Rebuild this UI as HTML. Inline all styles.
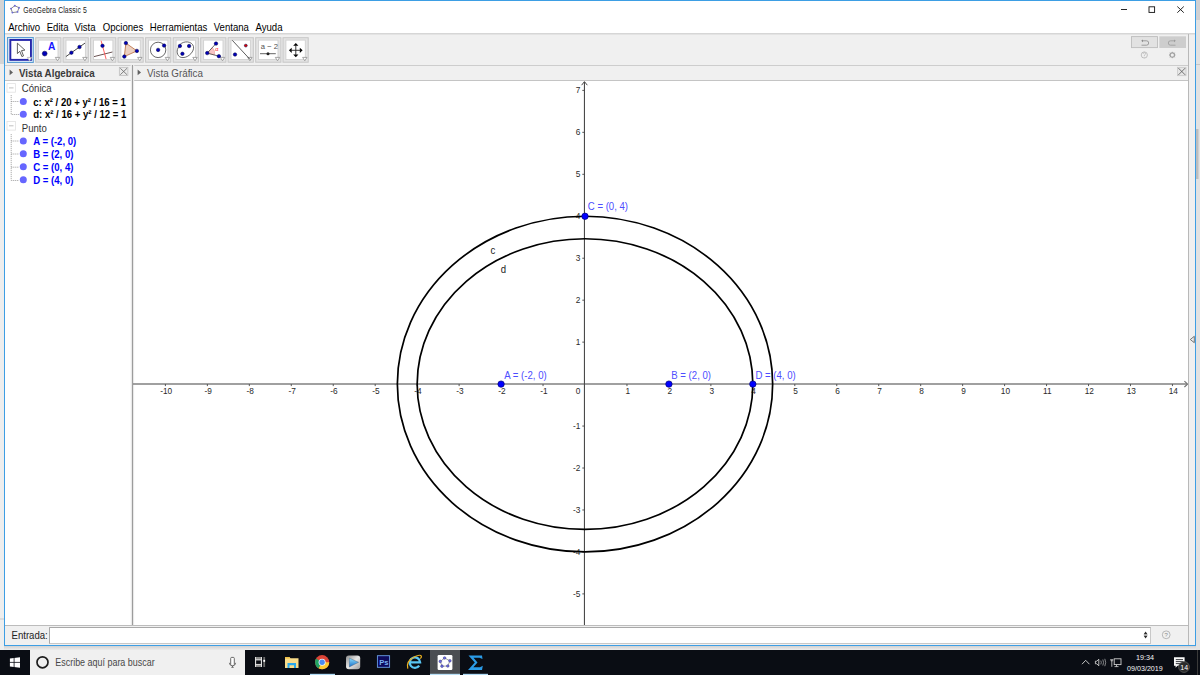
<!DOCTYPE html>
<html><head><meta charset="utf-8"><title>GeoGebra Classic 5</title>
<style>html,body{margin:0;padding:0;width:1200px;height:675px;overflow:hidden;background:#e9e9e9}svg{display:block}</style>
</head><body>
<svg width="1200" height="675" viewBox="0 0 1200 675" font-family="Liberation Sans">
<defs><clipPath id="gclip"><rect x="133" y="81" width="1055" height="544"/></clipPath></defs>
<rect x="0" y="0" width="1200" height="675" fill="#e9e9e9"/>
<rect x="0" y="0" width="4" height="64" fill="#d4d4d4"/>
<rect x="0" y="64" width="4" height="586" fill="#eeeeee"/>
<rect x="0" y="618.5" width="4" height="1" fill="#c8c8c8"/>
<rect x="1196" y="0" width="4" height="650" fill="#e2e2e2"/>
<rect x="1196" y="0" width="4" height="20" fill="#d0d0d2"/>
<rect x="1196" y="64" width="4" height="1" fill="#c6c6c6"/>
<defs><linearGradient id="shd" x1="0" y1="0" x2="0" y2="1"><stop offset="0" stop-color="#d2d2d2"/><stop offset="1" stop-color="#ececec"/></linearGradient></defs>
<rect x="4" y="646" width="1192" height="4" fill="url(#shd)"/>
<rect x="1196" y="129" width="2.5" height="50" fill="#bdbdbd"/>
<rect x="4" y="0" width="1192" height="646" fill="#f0f0f0"/>
<rect x="5" y="1" width="1190" height="32" fill="#ffffff"/>
<rect x="5" y="33" width="1190" height="1.5" fill="#d6d6d6"/>
<rect x="5" y="81" width="126" height="544" fill="#ffffff"/>
<rect x="133" y="81" width="1055" height="544" fill="#ffffff"/>
<rect x="5" y="65" width="1184" height="1" fill="#cdcdcd"/>
<rect x="5" y="80" width="126" height="1" fill="#c4c4c4"/>
<rect x="133" y="80" width="1055" height="1" fill="#c4c4c4"/>
<rect x="130.6" y="65" width="3.6" height="561" fill="#f2f2f2"/>
<rect x="131.9" y="65" width="1.2" height="561" fill="#9c9c9c"/>
<rect x="1188" y="34" width="1" height="611" fill="#b8b8b8"/>
<rect x="5" y="625" width="1183" height="1" fill="#bcbcbc"/>
<rect x="4.5" y="0.5" width="1191" height="645" fill="none" stroke="#3d9ee4" stroke-width="1"/>
<g fill="none" stroke="#707070" stroke-width="0.8"><path d="M14.8 5.7 L19 7.7 L17.5 11.9 L12.4 12.6 L11 8.6 Z"/></g>
<circle cx="14.8" cy="5.7" r="0.95" fill="#6a6ad8"/>
<circle cx="19" cy="7.7" r="0.95" fill="#6a6ad8"/>
<circle cx="17.5" cy="11.9" r="0.95" fill="#6a6ad8"/>
<circle cx="12.4" cy="12.6" r="0.95" fill="#6a6ad8"/>
<circle cx="11" cy="8.6" r="0.95" fill="#6a6ad8"/>
<text transform="translate(23.3 12.9) scale(0.86 1.05)" x="0" y="0" font-size="8" fill="#1a1a1a" letter-spacing="0.12">GeoGebra Classic 5</text>
<rect x="1121" y="9" width="6" height="0.9" fill="#111"/>
<rect x="1149" y="6.8" width="5.6" height="5.6" fill="none" stroke="#111" stroke-width="0.9"/>
<path d="M1177.3 6.5 L1183.8 12.7 M1183.8 6.5 L1177.3 12.7" stroke="#111" stroke-width="0.9"/>
<text transform="translate(8.2 30.5) scale(1 1.07)" x="0" y="0" font-size="9.6" fill="#000">Archivo</text>
<text transform="translate(46.7 30.5) scale(1 1.07)" x="0" y="0" font-size="9.6" fill="#000">Edita</text>
<text transform="translate(74.4 30.5) scale(1 1.07)" x="0" y="0" font-size="9.6" fill="#000">Vista</text>
<text transform="translate(102.7 30.5) scale(1 1.07)" x="0" y="0" font-size="9.6" fill="#000">Opciones</text>
<text transform="translate(149.8 30.5) scale(1 1.07)" x="0" y="0" font-size="9.6" fill="#000">Herramientas</text>
<text transform="translate(213.7 30.5) scale(1 1.07)" x="0" y="0" font-size="9.6" fill="#000">Ventana</text>
<text transform="translate(255.5 30.5) scale(1 1.07)" x="0" y="0" font-size="9.6" fill="#000">Ayuda</text>
<rect x="7.5" y="37.5" width="25.8" height="25" fill="#cfe3f6" stroke="#5a9cd2" stroke-width="1"/>
<rect x="10.35" y="39.95" width="20.6" height="19.9" fill="#ffffff" stroke="#2626aa" stroke-width="1.9"/>
<path d="M27.3 57.400000000000006 L31.7 57.400000000000006 L29.5 60.800000000000004 Z" fill="#fff" stroke="#b0b0b0" stroke-width="0.8"/>
<rect x="35.7" y="37.7" width="25.2" height="24.5" fill="#e4e4e4" stroke="#c6c6c6" stroke-width="1"/>
<rect x="38.6" y="40.1" width="19.4" height="19.5" fill="#ffffff" stroke="#d0d0d0" stroke-width="0.9"/>
<path d="M55.300000000000004 57.400000000000006 L59.70000000000001 57.400000000000006 L57.50000000000001 60.800000000000004 Z" fill="#fff" stroke="#909090" stroke-width="0.8"/>
<rect x="63.1" y="37.7" width="25.2" height="24.5" fill="#e4e4e4" stroke="#c6c6c6" stroke-width="1"/>
<rect x="66.0" y="40.1" width="19.4" height="19.5" fill="#ffffff" stroke="#d0d0d0" stroke-width="0.9"/>
<path d="M82.69999999999999 57.400000000000006 L87.1 57.400000000000006 L84.89999999999999 60.800000000000004 Z" fill="#fff" stroke="#909090" stroke-width="0.8"/>
<rect x="90.6" y="37.7" width="25.2" height="24.5" fill="#e4e4e4" stroke="#c6c6c6" stroke-width="1"/>
<rect x="93.5" y="40.1" width="19.4" height="19.5" fill="#ffffff" stroke="#d0d0d0" stroke-width="0.9"/>
<path d="M110.19999999999999 57.400000000000006 L114.6 57.400000000000006 L112.39999999999999 60.800000000000004 Z" fill="#fff" stroke="#909090" stroke-width="0.8"/>
<rect x="118.0" y="37.7" width="25.2" height="24.5" fill="#e4e4e4" stroke="#c6c6c6" stroke-width="1"/>
<rect x="120.9" y="40.1" width="19.4" height="19.5" fill="#ffffff" stroke="#d0d0d0" stroke-width="0.9"/>
<path d="M137.6 57.400000000000006 L141.99999999999997 57.400000000000006 L139.79999999999998 60.800000000000004 Z" fill="#fff" stroke="#909090" stroke-width="0.8"/>
<rect x="145.6" y="37.7" width="25.2" height="24.5" fill="#e4e4e4" stroke="#c6c6c6" stroke-width="1"/>
<rect x="148.5" y="40.1" width="19.4" height="19.5" fill="#ffffff" stroke="#d0d0d0" stroke-width="0.9"/>
<path d="M165.2 57.400000000000006 L169.59999999999997 57.400000000000006 L167.39999999999998 60.800000000000004 Z" fill="#fff" stroke="#909090" stroke-width="0.8"/>
<rect x="173.2" y="37.7" width="25.2" height="24.5" fill="#e4e4e4" stroke="#c6c6c6" stroke-width="1"/>
<rect x="176.1" y="40.1" width="19.4" height="19.5" fill="#ffffff" stroke="#d0d0d0" stroke-width="0.9"/>
<path d="M192.79999999999998 57.400000000000006 L197.19999999999996 57.400000000000006 L194.99999999999997 60.800000000000004 Z" fill="#fff" stroke="#909090" stroke-width="0.8"/>
<rect x="200.7" y="37.7" width="25.2" height="24.5" fill="#e4e4e4" stroke="#c6c6c6" stroke-width="1"/>
<rect x="203.6" y="40.1" width="19.4" height="19.5" fill="#ffffff" stroke="#d0d0d0" stroke-width="0.9"/>
<path d="M220.29999999999998 57.400000000000006 L224.69999999999996 57.400000000000006 L222.49999999999997 60.800000000000004 Z" fill="#fff" stroke="#909090" stroke-width="0.8"/>
<rect x="228.1" y="37.7" width="25.2" height="24.5" fill="#e4e4e4" stroke="#c6c6c6" stroke-width="1"/>
<rect x="231.0" y="40.1" width="19.4" height="19.5" fill="#ffffff" stroke="#d0d0d0" stroke-width="0.9"/>
<path d="M247.7 57.400000000000006 L252.09999999999997 57.400000000000006 L249.89999999999998 60.800000000000004 Z" fill="#fff" stroke="#909090" stroke-width="0.8"/>
<rect x="255.7" y="37.7" width="25.2" height="24.5" fill="#e4e4e4" stroke="#c6c6c6" stroke-width="1"/>
<rect x="258.59999999999997" y="40.1" width="19.4" height="19.5" fill="#ffffff" stroke="#d0d0d0" stroke-width="0.9"/>
<path d="M275.3 57.400000000000006 L279.7 57.400000000000006 L277.5 60.800000000000004 Z" fill="#fff" stroke="#909090" stroke-width="0.8"/>
<rect x="283.0" y="37.7" width="25.2" height="24.5" fill="#e4e4e4" stroke="#c6c6c6" stroke-width="1"/>
<rect x="285.9" y="40.1" width="19.4" height="19.5" fill="#ffffff" stroke="#d0d0d0" stroke-width="0.9"/>
<path d="M302.6 57.400000000000006 L307.0 57.400000000000006 L304.8 60.800000000000004 Z" fill="#fff" stroke="#909090" stroke-width="0.8"/>
<path d="M17.4 43.2 L17.4 53.6 L19.8 51.3 L21.9 56.6 L23.5 55.9 L21.5 50.6 L24.9 50.1 Z" fill="#fff" stroke="#3a3a3a" stroke-width="0.8" stroke-linejoin="round"/>
<circle cx="44.7" cy="53.6" r="2.4" fill="#0000b8" stroke="#000040" stroke-width="0.5"/>
<text transform="translate(47.90 50.00) scale(1 1.02)" x="0" y="0" font-size="10.2" font-weight="bold" fill="#1515ff" text-anchor="start" >A</text>
<path d="M65.9 56.6 L85 43.1" stroke="#333" stroke-width="0.9"/>
<circle cx="71.4" cy="52.7" r="1.75" fill="#0000b8" stroke="#000040" stroke-width="0.5"/>
<circle cx="79.5" cy="47.0" r="1.75" fill="#0000b8" stroke="#000040" stroke-width="0.5"/>
<path d="M94 56.6 L112.4 52" stroke="#5a4040" stroke-width="0.9"/>
<path d="M101.1 40.7 L106.1 59.1" stroke="#ff5050" stroke-width="0.9"/>
<circle cx="102.5" cy="45.8" r="1.75" fill="#0000b8" stroke="#000040" stroke-width="0.5"/>
<path d="M125.9 43.1 L136.9 50.9 L124.3 56.6 Z" fill="#ecd0c0" stroke="#c07850" stroke-width="0.9"/>
<circle cx="125.9" cy="43.1" r="1.75" fill="#0000b8" stroke="#000040" stroke-width="0.5"/>
<circle cx="136.9" cy="50.9" r="1.75" fill="#0000b8" stroke="#000040" stroke-width="0.5"/>
<circle cx="124.3" cy="56.6" r="1.75" fill="#0000b8" stroke="#000040" stroke-width="0.5"/>
<circle cx="158.1" cy="49.9" r="7.7" fill="none" stroke="#444" stroke-width="0.8"/>
<circle cx="158.1" cy="49.9" r="1.75" fill="#0000b8" stroke="#000040" stroke-width="0.5"/>
<circle cx="164.1" cy="45.6" r="1.75" fill="#0000b8" stroke="#000040" stroke-width="0.5"/>
<path d="M180 44.5 C184 40.5 192 41 193.5 46.5 C194.5 51 189 57.5 183 57.6 C177.5 57.8 176 52 178 48 Z" fill="none" stroke="#444" stroke-width="0.8"/>
<circle cx="179.9" cy="46.0" r="1.75" fill="#0000b8" stroke="#000040" stroke-width="0.5"/>
<circle cx="189.1" cy="46.0" r="1.75" fill="#0000b8" stroke="#000040" stroke-width="0.5"/>
<circle cx="182.4" cy="53.8" r="1.75" fill="#0000b8" stroke="#000040" stroke-width="0.5"/>
<path d="M207.2 53.1 L212.3 47.6 A7.5 7.5 0 0 1 214.5 55 Z" fill="#f8c4c4" stroke="#e89090" stroke-width="0.4"/>
<path d="M216 43.6 L207.2 53.1 L218.9 56.2" fill="none" stroke="#444" stroke-width="0.8"/>
<circle cx="207.2" cy="53.1" r="1.75" fill="#0000b8" stroke="#000040" stroke-width="0.5"/>
<circle cx="216" cy="43.6" r="1.75" fill="#0000b8" stroke="#000040" stroke-width="0.5"/>
<circle cx="218.9" cy="56.2" r="1.75" fill="#0000b8" stroke="#000040" stroke-width="0.5"/>
<text transform="translate(215.20 51.20) scale(1 1.05)" x="0" y="0" font-size="5.6" font-weight="normal" fill="#ff2020" text-anchor="start" >α</text>
<path d="M232.3 40.3 L250 59.4" stroke="#333" stroke-width="0.8"/>
<circle cx="235" cy="54.5" r="1.75" fill="#0000b8" stroke="#000040" stroke-width="0.5"/>
<circle cx="245.8" cy="45.6" r="1.45" fill="#e00000" stroke="#000040" stroke-width="0.5"/>
<text transform="translate(260.80 49.40) scale(1 1.05)" x="0" y="0" font-size="7.6" font-weight="normal" fill="#505050" text-anchor="start" >a − 2</text>
<path d="M260 53.7 L275.8 53.7" stroke="#555" stroke-width="0.9"/>
<circle cx="268" cy="53.7" r="1.5" fill="#222"/>
<g fill="#000"><path d="M295.8 43 L293.2 45.8 L298.4 45.8 Z"/><path d="M295.8 57.3 L293.2 54.6 L298.4 54.6 Z"/><path d="M288.9 50.3 L291.7 47.7 L291.7 52.9 Z"/><path d="M302.6 50.3 L299.8 47.7 L299.8 52.9 Z"/></g>
<path d="M295.8 45 L295.8 55.5 M290.5 50.3 L301 50.3" stroke="#222" stroke-width="0.9"/>
<rect x="1131.5" y="36.6" width="26" height="11" fill="#e2e2e2" stroke="#bdbdbd" stroke-width="0.9"/>
<rect x="1159.3" y="36.3" width="26.7" height="11.7" fill="#cdcdcd"/>
<path d="M1142 40.8 L1146.5 40.8 A2.2 2.2 0 0 1 1146.5 45.2 L1141.5 45.2" fill="none" stroke="#8a8a8a" stroke-width="0.8"/><path d="M1141.2 40.8 L1143 39.4 L1143 42.2 Z" fill="#8a8a8a"/>
<path d="M1175 40.8 L1170.5 40.8 A2.2 2.2 0 0 0 1170.5 45.2 L1175.5 45.2" fill="none" stroke="#9a9a9a" stroke-width="0.8"/><path d="M1175.8 40.8 L1174 39.4 L1174 42.2 Z" fill="#9a9a9a"/>
<circle cx="1144.3" cy="55" r="3.1" fill="none" stroke="#b4b4b4" stroke-width="0.8"/><path d="M1143.1 53.9 Q1143.3 52.6 1144.4 52.6 Q1145.6 52.7 1145.5 53.8 Q1145.4 54.6 1144.4 55.2 L1144.4 56.2 M1144.4 57 L1144.4 57.6" fill="none" stroke="#b4b4b4" stroke-width="0.7"/>
<circle cx="1172.3" cy="55" r="2.2" fill="none" stroke="#a0a0a0" stroke-width="1.2"/><path d="M1172.3 51.8 L1172.3 58.2 M1169.1 55 L1175.5 55 M1170 52.7 L1174.6 57.3 M1174.6 52.7 L1170 57.3" stroke="#a0a0a0" stroke-width="0.9"/><circle cx="1172.3" cy="55" r="1.5" fill="#f0f0f0"/>
<path d="M9.6 69.6 L13 72.4 L9.6 75.2 Z" fill="#606060"/>
<text transform="translate(19.00 76.60) scale(1 1.1)" x="0" y="0" font-size="9.8" font-weight="bold" fill="#3a3a3a" text-anchor="start" >Vista Algebraica</text>
<rect x="119.3" y="67.3" width="8.6" height="8.3" fill="#eaeaea" stroke="#b8b8b8" stroke-width="0.7"/>
<path d="M120.3 68.3 L127 74.7 M127 68.3 L120.3 74.7" stroke="#666" stroke-width="0.8"/>
<path d="M137.6 69.6 L141 72.4 L137.6 75.2 Z" fill="#606060"/>
<text transform="translate(147.00 76.70) scale(1 1.1)" x="0" y="0" font-size="9.8" font-weight="normal" fill="#555" text-anchor="start" >Vista Gráfica</text>
<rect x="1177.6" y="67.3" width="8.4" height="8.4" fill="#e6e6e6" stroke="#c4c4c4" stroke-width="0.7"/>
<path d="M1178.4 68.1 L1185.2 74.9 M1185.2 68.1 L1178.4 74.9" stroke="#555" stroke-width="0.8"/>
<rect x="7" y="83.6" width="8.5" height="8.6" fill="#fff" stroke="#e2e2e2" stroke-width="0.8"/>
<path d="M9 87.89999999999999 L13.5 87.89999999999999" stroke="#b0b0b0" stroke-width="0.8"/>
<rect x="7" y="121.5" width="8.5" height="8.6" fill="#fff" stroke="#e2e2e2" stroke-width="0.8"/>
<path d="M9 125.8 L13.5 125.8" stroke="#b0b0b0" stroke-width="0.8"/>
<text transform="translate(21.80 92.40) scale(1 1.1)" x="0" y="0" font-size="9.6" font-weight="normal" fill="#333" text-anchor="start" >Cónica</text>
<text transform="translate(21.80 131.50) scale(1 1.1)" x="0" y="0" font-size="9.6" font-weight="normal" fill="#333" text-anchor="start" >Punto</text>
<path d="M11.2 95 L11.2 114.5 L19 114.5 M11.2 101.5 L19 101.5" fill="none" stroke="#8a8a8a" stroke-width="0.7" stroke-dasharray="1.2 0.8"/>
<path d="M11.2 134 L11.2 180.5 L19 180.5 M11.2 141 L19 141 M11.2 154 L19 154 M11.2 167.2 L19 167.2" fill="none" stroke="#8a8a8a" stroke-width="0.7" stroke-dasharray="1.2 0.8"/>
<circle cx="23.3" cy="101.39999999999999" r="3.5" fill="#6666ff"/>
<text transform="translate(33.20 105.60) scale(1 1.1)" x="0" y="0" font-size="9.6" font-weight="bold" fill="#000" text-anchor="start" >c: x² / 20 + y² / 16 = 1</text>
<circle cx="23.3" cy="114.2" r="3.5" fill="#6666ff"/>
<text transform="translate(33.20 118.40) scale(1 1.1)" x="0" y="0" font-size="9.6" font-weight="bold" fill="#000" text-anchor="start" >d: x² / 16 + y² / 12 = 1</text>
<circle cx="23.3" cy="140.9" r="3.5" fill="#6666ff"/>
<text transform="translate(33.20 145.10) scale(1 1.1)" x="0" y="0" font-size="9.6" font-weight="bold" fill="#0000ff" text-anchor="start" >A = (-2, 0)</text>
<circle cx="23.3" cy="153.70000000000002" r="3.5" fill="#6666ff"/>
<text transform="translate(33.20 157.90) scale(1 1.1)" x="0" y="0" font-size="9.6" font-weight="bold" fill="#0000ff" text-anchor="start" >B = (2, 0)</text>
<circle cx="23.3" cy="166.8" r="3.5" fill="#6666ff"/>
<text transform="translate(33.20 171.00) scale(1 1.1)" x="0" y="0" font-size="9.6" font-weight="bold" fill="#0000ff" text-anchor="start" >C = (0, 4)</text>
<circle cx="23.3" cy="179.8" r="3.5" fill="#6666ff"/>
<text transform="translate(33.20 184.00) scale(1 1.1)" x="0" y="0" font-size="9.6" font-weight="bold" fill="#0000ff" text-anchor="start" >D = (4, 0)</text>
<g clip-path="url(#gclip)">
<path d="M133 384.1 L1187 384.1" stroke="#808080" stroke-width="1.5"/>
<path d="M1184.4 381.2 L1187.6 384.1 L1184.4 387" fill="none" stroke="#707070" stroke-width="1.1"/>
<path d="M584.45 82 L584.45 625" stroke="#4a4a4a" stroke-width="1.1"/>
<path d="M581.6 85.2 L584.45 81.6 L587.3 85.2" fill="none" stroke="#4a4a4a" stroke-width="1"/>
<path d="M165.40 384.1 L165.40 386.1 M207.36 384.1 L207.36 386.1 M249.32 384.1 L249.32 386.1 M291.28 384.1 L291.28 386.1 M333.24 384.1 L333.24 386.1 M375.20 384.1 L375.20 386.1 M417.16 384.1 L417.16 386.1 M459.12 384.1 L459.12 386.1 M501.08 384.1 L501.08 386.1 M543.04 384.1 L543.04 386.1 M626.96 384.1 L626.96 386.1 M668.92 384.1 L668.92 386.1 M710.88 384.1 L710.88 386.1 M752.84 384.1 L752.84 386.1 M794.80 384.1 L794.80 386.1 M836.76 384.1 L836.76 386.1 M878.72 384.1 L878.72 386.1 M920.68 384.1 L920.68 386.1 M962.64 384.1 L962.64 386.1 M1004.60 384.1 L1004.60 386.1 M1046.56 384.1 L1046.56 386.1 M1088.52 384.1 L1088.52 386.1 M1130.48 384.1 L1130.48 386.1 M1172.44 384.1 L1172.44 386.1 M582.3 593.90 L584.4 593.90 M582.3 551.94 L584.4 551.94 M582.3 509.98 L584.4 509.98 M582.3 468.02 L584.4 468.02 M582.3 426.06 L584.4 426.06 M582.3 342.14 L584.4 342.14 M582.3 300.18 L584.4 300.18 M582.3 258.22 L584.4 258.22 M582.3 216.26 L584.4 216.26 M582.3 174.30 L584.4 174.30 M582.3 132.34 L584.4 132.34 M582.3 90.38 L584.4 90.38" stroke="#444" stroke-width="0.9"/>
<text transform="translate(166.20 393.70) scale(1 1.02)" x="0" y="0" font-size="8.3" font-weight="normal" fill="#2a2a2a" text-anchor="middle" >-10</text>
<text transform="translate(208.16 393.70) scale(1 1.02)" x="0" y="0" font-size="8.3" font-weight="normal" fill="#2a2a2a" text-anchor="middle" >-9</text>
<text transform="translate(250.12 393.70) scale(1 1.02)" x="0" y="0" font-size="8.3" font-weight="normal" fill="#2a2a2a" text-anchor="middle" >-8</text>
<text transform="translate(292.08 393.70) scale(1 1.02)" x="0" y="0" font-size="8.3" font-weight="normal" fill="#2a2a2a" text-anchor="middle" >-7</text>
<text transform="translate(334.04 393.70) scale(1 1.02)" x="0" y="0" font-size="8.3" font-weight="normal" fill="#2a2a2a" text-anchor="middle" >-6</text>
<text transform="translate(376.00 393.70) scale(1 1.02)" x="0" y="0" font-size="8.3" font-weight="normal" fill="#2a2a2a" text-anchor="middle" >-5</text>
<text transform="translate(417.96 393.70) scale(1 1.02)" x="0" y="0" font-size="8.3" font-weight="normal" fill="#2a2a2a" text-anchor="middle" >-4</text>
<text transform="translate(459.92 393.70) scale(1 1.02)" x="0" y="0" font-size="8.3" font-weight="normal" fill="#2a2a2a" text-anchor="middle" >-3</text>
<text transform="translate(501.88 393.70) scale(1 1.02)" x="0" y="0" font-size="8.3" font-weight="normal" fill="#2a2a2a" text-anchor="middle" >-2</text>
<text transform="translate(543.84 393.70) scale(1 1.02)" x="0" y="0" font-size="8.3" font-weight="normal" fill="#2a2a2a" text-anchor="middle" >-1</text>
<text transform="translate(580.40 393.70) scale(1 1.02)" x="0" y="0" font-size="8.3" font-weight="normal" fill="#2a2a2a" text-anchor="end" >0</text>
<text transform="translate(627.76 393.70) scale(1 1.02)" x="0" y="0" font-size="8.3" font-weight="normal" fill="#2a2a2a" text-anchor="middle" >1</text>
<text transform="translate(669.72 393.70) scale(1 1.02)" x="0" y="0" font-size="8.3" font-weight="normal" fill="#2a2a2a" text-anchor="middle" >2</text>
<text transform="translate(711.68 393.70) scale(1 1.02)" x="0" y="0" font-size="8.3" font-weight="normal" fill="#2a2a2a" text-anchor="middle" >3</text>
<text transform="translate(753.64 393.70) scale(1 1.02)" x="0" y="0" font-size="8.3" font-weight="normal" fill="#2a2a2a" text-anchor="middle" >4</text>
<text transform="translate(795.60 393.70) scale(1 1.02)" x="0" y="0" font-size="8.3" font-weight="normal" fill="#2a2a2a" text-anchor="middle" >5</text>
<text transform="translate(837.56 393.70) scale(1 1.02)" x="0" y="0" font-size="8.3" font-weight="normal" fill="#2a2a2a" text-anchor="middle" >6</text>
<text transform="translate(879.52 393.70) scale(1 1.02)" x="0" y="0" font-size="8.3" font-weight="normal" fill="#2a2a2a" text-anchor="middle" >7</text>
<text transform="translate(921.48 393.70) scale(1 1.02)" x="0" y="0" font-size="8.3" font-weight="normal" fill="#2a2a2a" text-anchor="middle" >8</text>
<text transform="translate(963.44 393.70) scale(1 1.02)" x="0" y="0" font-size="8.3" font-weight="normal" fill="#2a2a2a" text-anchor="middle" >9</text>
<text transform="translate(1005.40 393.70) scale(1 1.02)" x="0" y="0" font-size="8.3" font-weight="normal" fill="#2a2a2a" text-anchor="middle" >10</text>
<text transform="translate(1047.36 393.70) scale(1 1.02)" x="0" y="0" font-size="8.3" font-weight="normal" fill="#2a2a2a" text-anchor="middle" >11</text>
<text transform="translate(1089.32 393.70) scale(1 1.02)" x="0" y="0" font-size="8.3" font-weight="normal" fill="#2a2a2a" text-anchor="middle" >12</text>
<text transform="translate(1131.28 393.70) scale(1 1.02)" x="0" y="0" font-size="8.3" font-weight="normal" fill="#2a2a2a" text-anchor="middle" >13</text>
<text transform="translate(1173.24 393.70) scale(1 1.02)" x="0" y="0" font-size="8.3" font-weight="normal" fill="#2a2a2a" text-anchor="middle" >14</text>
<text transform="translate(580.40 596.90) scale(1 1.02)" x="0" y="0" font-size="8.3" font-weight="normal" fill="#2a2a2a" text-anchor="end" >-5</text>
<text transform="translate(580.40 554.94) scale(1 1.02)" x="0" y="0" font-size="8.3" font-weight="normal" fill="#2a2a2a" text-anchor="end" >-4</text>
<text transform="translate(580.40 512.98) scale(1 1.02)" x="0" y="0" font-size="8.3" font-weight="normal" fill="#2a2a2a" text-anchor="end" >-3</text>
<text transform="translate(580.40 471.02) scale(1 1.02)" x="0" y="0" font-size="8.3" font-weight="normal" fill="#2a2a2a" text-anchor="end" >-2</text>
<text transform="translate(580.40 429.06) scale(1 1.02)" x="0" y="0" font-size="8.3" font-weight="normal" fill="#2a2a2a" text-anchor="end" >-1</text>
<text transform="translate(580.40 345.14) scale(1 1.02)" x="0" y="0" font-size="8.3" font-weight="normal" fill="#2a2a2a" text-anchor="end" >1</text>
<text transform="translate(580.40 303.18) scale(1 1.02)" x="0" y="0" font-size="8.3" font-weight="normal" fill="#2a2a2a" text-anchor="end" >2</text>
<text transform="translate(580.40 261.22) scale(1 1.02)" x="0" y="0" font-size="8.3" font-weight="normal" fill="#2a2a2a" text-anchor="end" >3</text>
<text transform="translate(580.40 219.26) scale(1 1.02)" x="0" y="0" font-size="8.3" font-weight="normal" fill="#2a2a2a" text-anchor="end" >4</text>
<text transform="translate(580.40 177.30) scale(1 1.02)" x="0" y="0" font-size="8.3" font-weight="normal" fill="#2a2a2a" text-anchor="end" >5</text>
<text transform="translate(580.40 135.34) scale(1 1.02)" x="0" y="0" font-size="8.3" font-weight="normal" fill="#2a2a2a" text-anchor="end" >6</text>
<text transform="translate(580.40 93.38) scale(1 1.02)" x="0" y="0" font-size="8.3" font-weight="normal" fill="#2a2a2a" text-anchor="end" >7</text>
<ellipse cx="585.0" cy="384.1" rx="187.65" ry="167.84" fill="none" stroke="#000" stroke-width="1.7"/>
<ellipse cx="585.0" cy="384.1" rx="167.84" ry="145.35" fill="none" stroke="#000" stroke-width="1.7"/>
<text transform="translate(490.50 253.50) scale(1 1.1)" x="0" y="0" font-size="9.6" font-weight="normal" fill="#222" text-anchor="start" >c</text>
<text transform="translate(500.80 272.80) scale(1 1.1)" x="0" y="0" font-size="9.6" font-weight="normal" fill="#222" text-anchor="start" >d</text>
<circle cx="501.08" cy="384.10" r="3.2" fill="#0000ff" stroke="#00007a" stroke-width="0.7"/>
<text transform="translate(504.30 378.50) scale(1 1.1)" x="0" y="0" font-size="9.6" font-weight="normal" fill="#4d4dff" text-anchor="start" >A = (-2, 0)</text>
<circle cx="668.92" cy="384.10" r="3.2" fill="#0000ff" stroke="#00007a" stroke-width="0.7"/>
<text transform="translate(671.30 378.50) scale(1 1.1)" x="0" y="0" font-size="9.6" font-weight="normal" fill="#4d4dff" text-anchor="start" >B = (2, 0)</text>
<circle cx="585.00" cy="216.26" r="3.2" fill="#0000ff" stroke="#00007a" stroke-width="0.7"/>
<text transform="translate(587.80 209.90) scale(1 1.1)" x="0" y="0" font-size="9.6" font-weight="normal" fill="#4d4dff" text-anchor="start" >C = (0, 4)</text>
<circle cx="752.84" cy="384.10" r="3.2" fill="#0000ff" stroke="#00007a" stroke-width="0.7"/>
<text transform="translate(755.50 378.50) scale(1 1.1)" x="0" y="0" font-size="9.6" font-weight="normal" fill="#4d4dff" text-anchor="start" >D = (4, 0)</text>
</g>
<path d="M1190.3 339.5 L1194.3 336.3 L1194.3 342.7 Z" fill="none" stroke="#555" stroke-width="0.8"/>
<text transform="translate(11.50 639.30) scale(1 1.08)" x="0" y="0" font-size="9.6" font-weight="normal" fill="#222" text-anchor="start" >Entrada:</text>
<rect x="49.5" y="627.5" width="1101" height="16" fill="#fff" stroke="#c8c8c8" stroke-width="1"/><path d="M49.5 643.5 L49.5 627.5 L1150.5 627.5" fill="none" stroke="#a8a8a8" stroke-width="1"/>
<path d="M1145.6 631.6 L1143.7 634.3 L1147.5 634.3 Z M1145.6 638.4 L1143.7 635.7 L1147.5 635.7 Z" fill="#2a2a2a"/><rect x="1143.9" y="634.3" width="3.4" height="1.4" fill="#9a9a9a"/>
<circle cx="1166.2" cy="634.8" r="3.9" fill="none" stroke="#a8a8a8" stroke-width="0.8"/>
<text transform="translate(1166.20 637.10) scale(1 1.02)" x="0" y="0" font-size="6" font-weight="normal" fill="#8a8a8a" text-anchor="middle" >?</text>
<rect x="0" y="650" width="1200" height="25" fill="#0a0d14"/>
<path d="M9.9 658.4 L20 657.2 L20 667.7 L9.9 666.5 Z" fill="#fff"/><path d="M14.1 656.5 L14.1 668.5 M9 662.4 L21 662.4" stroke="#0a0d14" stroke-width="0.8"/>
<rect x="30" y="650" width="215" height="25" fill="#f0f0f0"/>
<circle cx="42.5" cy="662.3" r="5.5" fill="none" stroke="#1e1e1e" stroke-width="1.7"/>
<text transform="translate(55.3 666.2) scale(0.895 1.02)" x="0" y="0" font-size="10" fill="#484848">Escribe aquí para buscar</text>
<path d="M230.7 664.6 L230.7 658.4 Q230.7 657.4 231.7 657.4 L233.3 657.4 Q234.3 657.4 234.3 658.4 L234.3 664.6" fill="#fff" stroke="#5a5a5a" stroke-width="0.9"/><path d="M229.4 662.8 Q229.6 665.8 232.5 665.8 Q235.4 665.8 235.6 662.8 M232.5 665.8 L232.5 667.2 M231.3 667.3 L233.7 667.3" fill="none" stroke="#5a5a5a" stroke-width="0.9"/>
<rect x="255" y="657" width="7" height="10" fill="#8a8a8a"/><rect x="256.2" y="660.3" width="4.6" height="3.6" fill="#0a0d14"/>
<path d="M255 659.8 L262 659.8 M255 664.6 L262 664.6 M255.5 657 L255.5 667 M261.5 657 L261.5 667" stroke="#e6e6e6" stroke-width="0.9"/>
<rect x="263.3" y="657" width="1.8" height="10" fill="#6a6a6a"/><rect x="263.3" y="659.8" width="1.8" height="2" fill="#fff"/>
<path d="M285 657.3 L289.5 657.3 L290.5 658.3 L298.5 658.3 L298.5 668 L285 668 Z" fill="#f9dc8a"/><rect x="285" y="657" width="4.8" height="1.6" fill="#eec048"/>
<path d="M287.5 663 L296 663 L296 668 L294 668 L294 665.2 L289.5 665.2 L289.5 668 L287.5 668 Z" fill="#2aa8ec"/>
<circle cx="322.1" cy="662.2" r="7.1" fill="#db4437"/>
<path d="M322.1 662.2 L329.2 662.2 A7.1 7.1 0 0 1 318.5 668.3 Z" fill="#fcc934"/>
<path d="M322.1 662.2 L318.5 668.3 A7.1 7.1 0 0 1 316 658.6 Z" fill="#1fa463"/>
<path d="M325.6 662.2 L329.2 662.2 M320.3 665.2 L318.5 668.3 M320.3 659.2 L316 658.6" stroke="none"/>
<circle cx="322.1" cy="662.2" r="3.5" fill="#f4f4f4"/><circle cx="322.1" cy="662.2" r="2.7" fill="#4a8af4"/>
<rect x="310" y="673.8" width="25" height="1.2" fill="#b0dbf5"/>
<defs><linearGradient id="mpg" x1="0" y1="0" x2="1" y2="1"><stop offset="0" stop-color="#8c8c8c"/><stop offset="0.5" stop-color="#e8e8e8"/><stop offset="1" stop-color="#9a9a9a"/></linearGradient><linearGradient id="mpb" x1="0" y1="0" x2="0" y2="1"><stop offset="0" stop-color="#8ee0ff"/><stop offset="1" stop-color="#1a70c8"/></linearGradient></defs>
<rect x="346" y="655.5" width="14.2" height="13.8" rx="2.8" fill="url(#mpg)"/><path d="M349.3 658 L358.6 662.3 L349.3 667 Z" fill="url(#mpb)" stroke="#334" stroke-width="0.3"/>
<rect x="377.4" y="655.7" width="12.2" height="11.6" fill="#0c0a5c" stroke="#6a9ee6" stroke-width="0.9"/>
<text x="379.2" y="664.6" font-family="Liberation Sans" font-size="7.6" font-weight="bold" fill="#7ab2f4">Ps</text>
<path d="M409.6 662.4 L420.1 662.4 A5.2 5.2 0 1 0 419.2 665.6" fill="none" stroke="#59c6f4" stroke-width="2.3"/>
<path d="M407.8 668.6 Q405.8 661 414.5 656.8 Q420.5 654 421.4 656.3 Q421.6 657.3 420.2 658.6" fill="none" stroke="#eab020" stroke-width="1.2"/>
<rect x="430" y="650" width="30" height="25" fill="#4b4e52"/>
<rect x="437.6" y="655" width="14.8" height="15" rx="1.2" fill="#fff"/>
<path d="M444.6 658 L449.9 660.8 L447.8 666 L442 666.2 L440.3 661.4 Z" fill="none" stroke="#8a8a8a" stroke-width="0.8"/>
<circle cx="444.6" cy="658" r="1.35" fill="#6a6ae0" stroke="#303070" stroke-width="0.4"/>
<circle cx="449.9" cy="660.8" r="1.35" fill="#6a6ae0" stroke="#303070" stroke-width="0.4"/>
<circle cx="447.8" cy="666" r="1.35" fill="#6a6ae0" stroke="#303070" stroke-width="0.4"/>
<circle cx="442" cy="666.2" r="1.35" fill="#6a6ae0" stroke="#303070" stroke-width="0.4"/>
<circle cx="440.3" cy="661.4" r="1.35" fill="#6a6ae0" stroke="#303070" stroke-width="0.4"/>
<rect x="430" y="673.8" width="30" height="1.2" fill="#b8dff6"/>
<path d="M468.5 655.5 L482 655.5 L482.5 659 L479.5 657.8 L473.5 657.8 L477.5 662.5 L473.3 667.3 L480 667.3 L482.8 665.8 L482 670 L468 670 L474.8 662.5 Z" fill="#2b9ce8"/>
<rect x="463" y="673.8" width="25" height="1.2" fill="#b0dbf5"/>
<path d="M1082 664.2 L1085.7 660.3 L1089.4 664.2" fill="none" stroke="#d8d8d8" stroke-width="0.9"/>
<path d="M1095.4 661.2 L1096.8 661.2 L1098.8 659.2 L1098.8 665.8 L1096.8 663.8 L1095.4 663.8 Z" fill="none" stroke="#cfcfcf" stroke-width="0.9"/><path d="M1100.8 660.6 Q1101.8 662.5 1100.8 664.4 M1102.8 659.5 Q1104.3 662.5 1102.8 665.5 M1104.8 658.8 Q1106.6 662.5 1104.8 666.2" fill="none" stroke="#b8b8b8" stroke-width="0.7"/>
<rect x="1114.2" y="658.8" width="6.8" height="5.8" fill="none" stroke="#cfcfcf" stroke-width="0.9"/><path d="M1114.5 666.6 L1118.5 666.6 M1116.5 664.6 L1116.5 666.6 M1111.8 659 L1111.8 666.8 M1110.8 659 L1110.8 660.5 M1112.8 659 L1112.8 660.5 M1110.8 660.8 L1112.8 660.8" fill="none" stroke="#d8d8d8" stroke-width="0.8"/>
<text transform="translate(1145 659.7) scale(0.95 1.02)" x="0" y="0" font-size="7.6" fill="#f4f4f4" text-anchor="middle">19:34</text>
<text transform="translate(1144.9 670.6) scale(0.94 1.0)" x="0" y="0" font-size="7.6" fill="#f4f4f4" text-anchor="middle">09/03/2019</text>
<path d="M1174 657.3 L1184.6 657.3 L1184.6 665.8 L1177.5 665.8 L1175.6 667.8 L1175.6 665.8 L1174 665.8 Z" fill="#fafafa"/><path d="M1175.8 659.6 L1183 659.6 M1175.8 661.6 L1183 661.6 M1175.8 663.6 L1181 663.6" stroke="#0a0d14" stroke-width="0.8"/>
<circle cx="1184" cy="667" r="5.4" fill="#2b2b2b" stroke="#5a5a5a" stroke-width="0.8"/>
<text transform="translate(1184.2 669.7) scale(0.95 1.05)" x="0" y="0" font-size="7.4" fill="#fff" text-anchor="middle">14</text>
<rect x="1197" y="650" width="1" height="25" fill="#3a3a3a"/>
</svg>
</body></html>
